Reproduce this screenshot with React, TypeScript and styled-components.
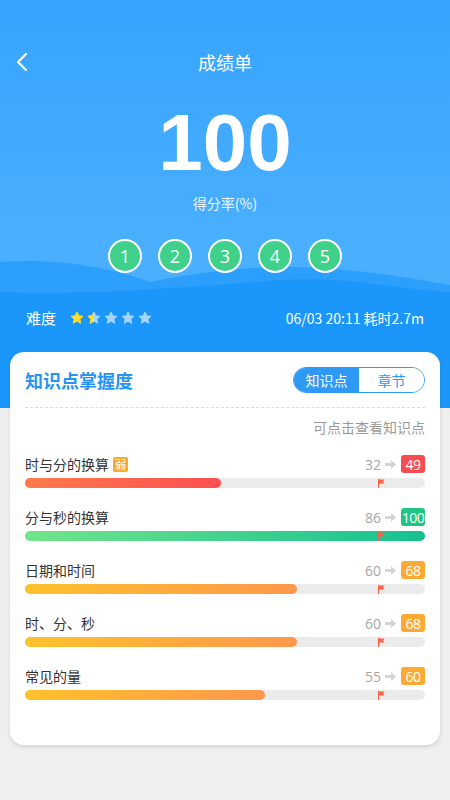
import React from 'react';
import styled, {createGlobalStyle} from 'styled-components';

type RowType = {
    id: number
    title: string
    weak?: boolean
    before: number
    after: number
    tone: 'red' | 'green' | 'orange'
}

const rows: RowType[] = [
    {id: 1, title: '时与分的换算', weak: true, before: 32, after: 49, tone: 'red'},
    {id: 2, title: '分与秒的换算', before: 86, after: 100, tone: 'green'},
    {id: 3, title: '日期和时间', before: 60, after: 68, tone: 'orange'},
    {id: 4, title: '时、分、秒', before: 60, after: 68, tone: 'orange'},
    {id: 5, title: '常见的量', before: 55, after: 60, tone: 'orange'},
]

const fills = {
    red: 'linear-gradient(90deg, #ff7a4c, #ff4f52)',
    green: 'linear-gradient(90deg, #72e48a, #14c191)',
    orange: 'linear-gradient(90deg, #fec22c, #fe974c)',
}

const badges = {
    red: '#f64e50',
    green: '#20c485',
    orange: '#fcaa33',
}

const GlobalStyle = createGlobalStyle`
  body {
    margin: 0;
    background: #efefef;
    font-family: "Noto Sans CJK SC", "Noto Sans", sans-serif;
  }
`

const Star = ({fill}: { fill: 'full' | 'half' | 'empty' }) => {
    const d = 'M7 1 L8.8 4.9 L13 5.3 L9.8 8.1 L10.8 12.3 L7 10.1 L3.2 12.3 L4.2 8.1 L1 5.3 L5.2 4.9 Z'
    return (
        <svg width="14" height="14" viewBox="0 0 14 14">
            <defs>
                <clipPath id="halfclip">
                    <rect x="0" y="0" width="7" height="14"/>
                </clipPath>
            </defs>
            <path d={d} fill={fill === 'full' ? '#ffdc2e' : '#a6d6fd'} stroke={fill === 'full' ? '#ffdc2e' : '#a6d6fd'} strokeWidth="1" strokeLinejoin="round"/>
            {fill === 'half' &&
                <path d={d} fill="#ffdc2e" stroke="#ffdc2e" strokeWidth="1" strokeLinejoin="round" clipPath="url(#halfclip)"/>}
        </svg>
    )
}

const Flag = () => (
    <svg width="7" height="9" viewBox="0 0 7 9">
        <rect x="0" y="0" width="1.2" height="9" fill="#ff6048"/>
        <path d="M1 0.5 H6.5 L5 2.5 L6.5 4.5 H1 Z" fill="#ff6048"/>
    </svg>
)

const Arrow = () => (
    <svg width="11" height="9" viewBox="0 0 11 9">
        <path d="M0 3 H6 V0 L11 4.5 L6 9 V6 H0 Z" fill="#d4d4d4"/>
    </svg>
)

export default function App() {
    return (
        <Page>
            <GlobalStyle/>
            <Header>
                <Waves width="450" height="408" viewBox="0 0 450 408">
                    <path d="M0 262 C60 258 110 268 150 282 C200 272 260 264 320 268 C380 272 420 280 450 285 L450 408 L0 408 Z"
                          fill="#2c9ffc"/>
                    <path d="M0 292 C100 296 200 286 280 280 C350 276 400 290 450 292 L450 408 L0 408 Z"
                          fill="#1b97fc"/>
                </Waves>
                <Nav>
                    <Back>
                        <svg width="12" height="20" viewBox="0 0 12 20">
                            <path d="M10 2 L2 10 L10 18" fill="none" stroke="#fff" strokeWidth="2.2"
                                  strokeLinecap="round" strokeLinejoin="round"/>
                        </svg>
                    </Back>
                    <NavTitle>成绩单</NavTitle>
                </Nav>
                <Score>100</Score>
                <ScoreLabel>得分率(%)</ScoreLabel>
                <Circles>
                    {[1, 2, 3, 4, 5].map(n => <Circle key={n}>{n}</Circle>)}
                </Circles>
                <Info>
                    <Difficulty>
                        难度
                        <Stars>
                            <Star fill="full"/>
                            <Star fill="half"/>
                            <Star fill="empty"/>
                            <Star fill="empty"/>
                            <Star fill="empty"/>
                        </Stars>
                    </Difficulty>
                    <span>06/03 20:11 耗时2.7m</span>
                </Info>
            </Header>
            <Card>
                <CardHead>
                    <CardTitle>知识点掌握度</CardTitle>
                    <Toggle>
                        <ToggleItem active>知识点</ToggleItem>
                        <ToggleItem>章节</ToggleItem>
                    </Toggle>
                </CardHead>
                <Divider/>
                <Hint>可点击查看知识点</Hint>
                {rows.map(row => (
                    <Row key={row.id}>
                        <RowHead>
                            <Label>
                                {row.title}
                                {row.weak && <Weak>弱</Weak>}
                            </Label>
                            <Scores>
                                <Before>{row.before}</Before>
                                <Arrow/>
                                <Badge tone={row.tone}>{row.after}</Badge>
                            </Scores>
                        </RowHead>
                        <Track>
                            <Fill tone={row.tone} style={{width: `${row.after}%`}}/>
                            <FlagPin><Flag/></FlagPin>
                        </Track>
                    </Row>
                ))}
            </Card>
        </Page>
    )
}

const Page = styled.div`
  min-height: 800px;
  background: #efefef;
`

const Header = styled.div`
  position: relative;
  height: 408px;
  background: linear-gradient(180deg, #36a4fd 0%, #4aaffe 62%);
  color: #fff;
  display: flex;
  flex-direction: column;
  align-items: center;
  overflow: hidden;
`

const Waves = styled.svg`
  position: absolute;
  left: 0;
  top: 0;
`

const Nav = styled.div`
  position: relative;
  width: 100%;
  height: 44px;
  margin-top: 40px;
  display: flex;
  align-items: center;
  justify-content: center;
`

const Back = styled.div`
  position: absolute;
  left: 16px;
  top: 12px;
  display: flex;
`

const NavTitle = styled.div`
  font-size: 18px;
  line-height: 44px;
`

const Score = styled.div`
  position: relative;
  margin-top: 19px;
  height: 80px;
  line-height: 80px;
  font-size: 80px;
  font-weight: bold;
  font-family: "Liberation Sans", Arial, sans-serif;
`

const ScoreLabel = styled.div`
  position: relative;
  margin-top: 10px;
  line-height: 20px;
  font-size: 14px;
  color: #eef7ff;
`

const Circles = styled.div`
  position: relative;
  margin-top: 26px;
  display: flex;
  gap: 16px;
`

const Circle = styled.div`
  box-sizing: border-box;
  width: 34px;
  height: 34px;
  border-radius: 50%;
  border: 2px solid #fff;
  background: #3fd18a;
  display: flex;
  align-items: center;
  justify-content: center;
  font-size: 18px;
  font-family: "Open Sans", sans-serif;
`

const Info = styled.div`
  position: relative;
  box-sizing: border-box;
  width: 100%;
  margin-top: 35px;
  padding: 0 26px;
  display: flex;
  justify-content: space-between;
  align-items: center;
  line-height: 20px;
  font-size: 14px;
`

const Difficulty = styled.div`
  display: flex;
  align-items: center;
  font-size: 15px;
`

const Stars = styled.div`
  display: flex;
  gap: 3px;
  margin-left: 14px;
`

const Card = styled.div`
  position: relative;
  box-sizing: border-box;
  height: 393px;
  margin: -56px 10px 0;
  padding: 15px 15px 0;
  background: #fff;
  border-radius: 14px;
  box-shadow: 0 2px 4px rgba(0, 0, 0, 0.12);
`

const CardHead = styled.div`
  display: flex;
  justify-content: space-between;
  align-items: center;
  height: 26px;
`

const CardTitle = styled.div`
  font-size: 18px;
  font-weight: bold;
  color: #2794f2;
`

const Toggle = styled.div`
  display: flex;
  width: 132px;
  height: 26px;
  box-sizing: border-box;
  border: 1px solid #2e9af6;
  border-radius: 13px;
  overflow: hidden;
`

const ToggleItem = styled.div<{ active?: boolean }>`
  flex: 1;
  display: flex;
  align-items: center;
  justify-content: center;
  font-size: 14px;
  background: ${p => p.active ? '#2e9af6' : '#fff'};
  color: ${p => p.active ? '#fff' : '#2e9af6'};
`

const Divider = styled.div`
  margin-top: 14px;
  border-top: 1px dashed #dcdcdc;
`

const Hint = styled.div`
  margin-top: 9px;
  line-height: 20px;
  text-align: right;
  font-size: 14px;
  color: #9a9a9a;
`

const Row = styled.div`
  margin-top: 17px;

  & + & {
    margin-top: 19px;
  }
`

const RowHead = styled.div`
  display: flex;
  justify-content: space-between;
  align-items: center;
  height: 20px;
`

const Label = styled.div`
  display: flex;
  align-items: center;
  font-size: 14px;
  color: #333;
`

const Weak = styled.span`
  display: inline-flex;
  align-items: center;
  justify-content: center;
  width: 15px;
  height: 15px;
  margin-left: 4px;
  border-radius: 2px;
  background: #fba92c;
  color: #fff;
  font-size: 11px;
`

const Scores = styled.div`
  display: flex;
  align-items: center;
  gap: 4px;
`

const Before = styled.span`
  font-size: 14px;
  color: #a6a6a6;
  font-family: "Open Sans", sans-serif;
`

const Badge = styled.span<{ tone: RowType['tone'] }>`
  display: inline-flex;
  align-items: center;
  justify-content: center;
  width: 24px;
  height: 18px;
  box-sizing: border-box;
  margin-left: 1px;
  border-radius: 3px;
  background: ${p => badges[p.tone]};
  color: #fff;
  font-size: 14px;
  letter-spacing: -0.6px;
  white-space: nowrap;
  font-family: "Open Sans", sans-serif;
`

const Track = styled.div`
  position: relative;
  margin-top: 4px;
  height: 10px;
  border-radius: 5px;
  background: #ebebeb;
`

const Fill = styled.div<{ tone: RowType['tone'] }>`
  height: 100%;
  border-radius: 5px;
  background: ${p => fills[p.tone]};
`

const FlagPin = styled.div`
  position: absolute;
  left: 353px;
  top: 1px;
  display: flex;
`
